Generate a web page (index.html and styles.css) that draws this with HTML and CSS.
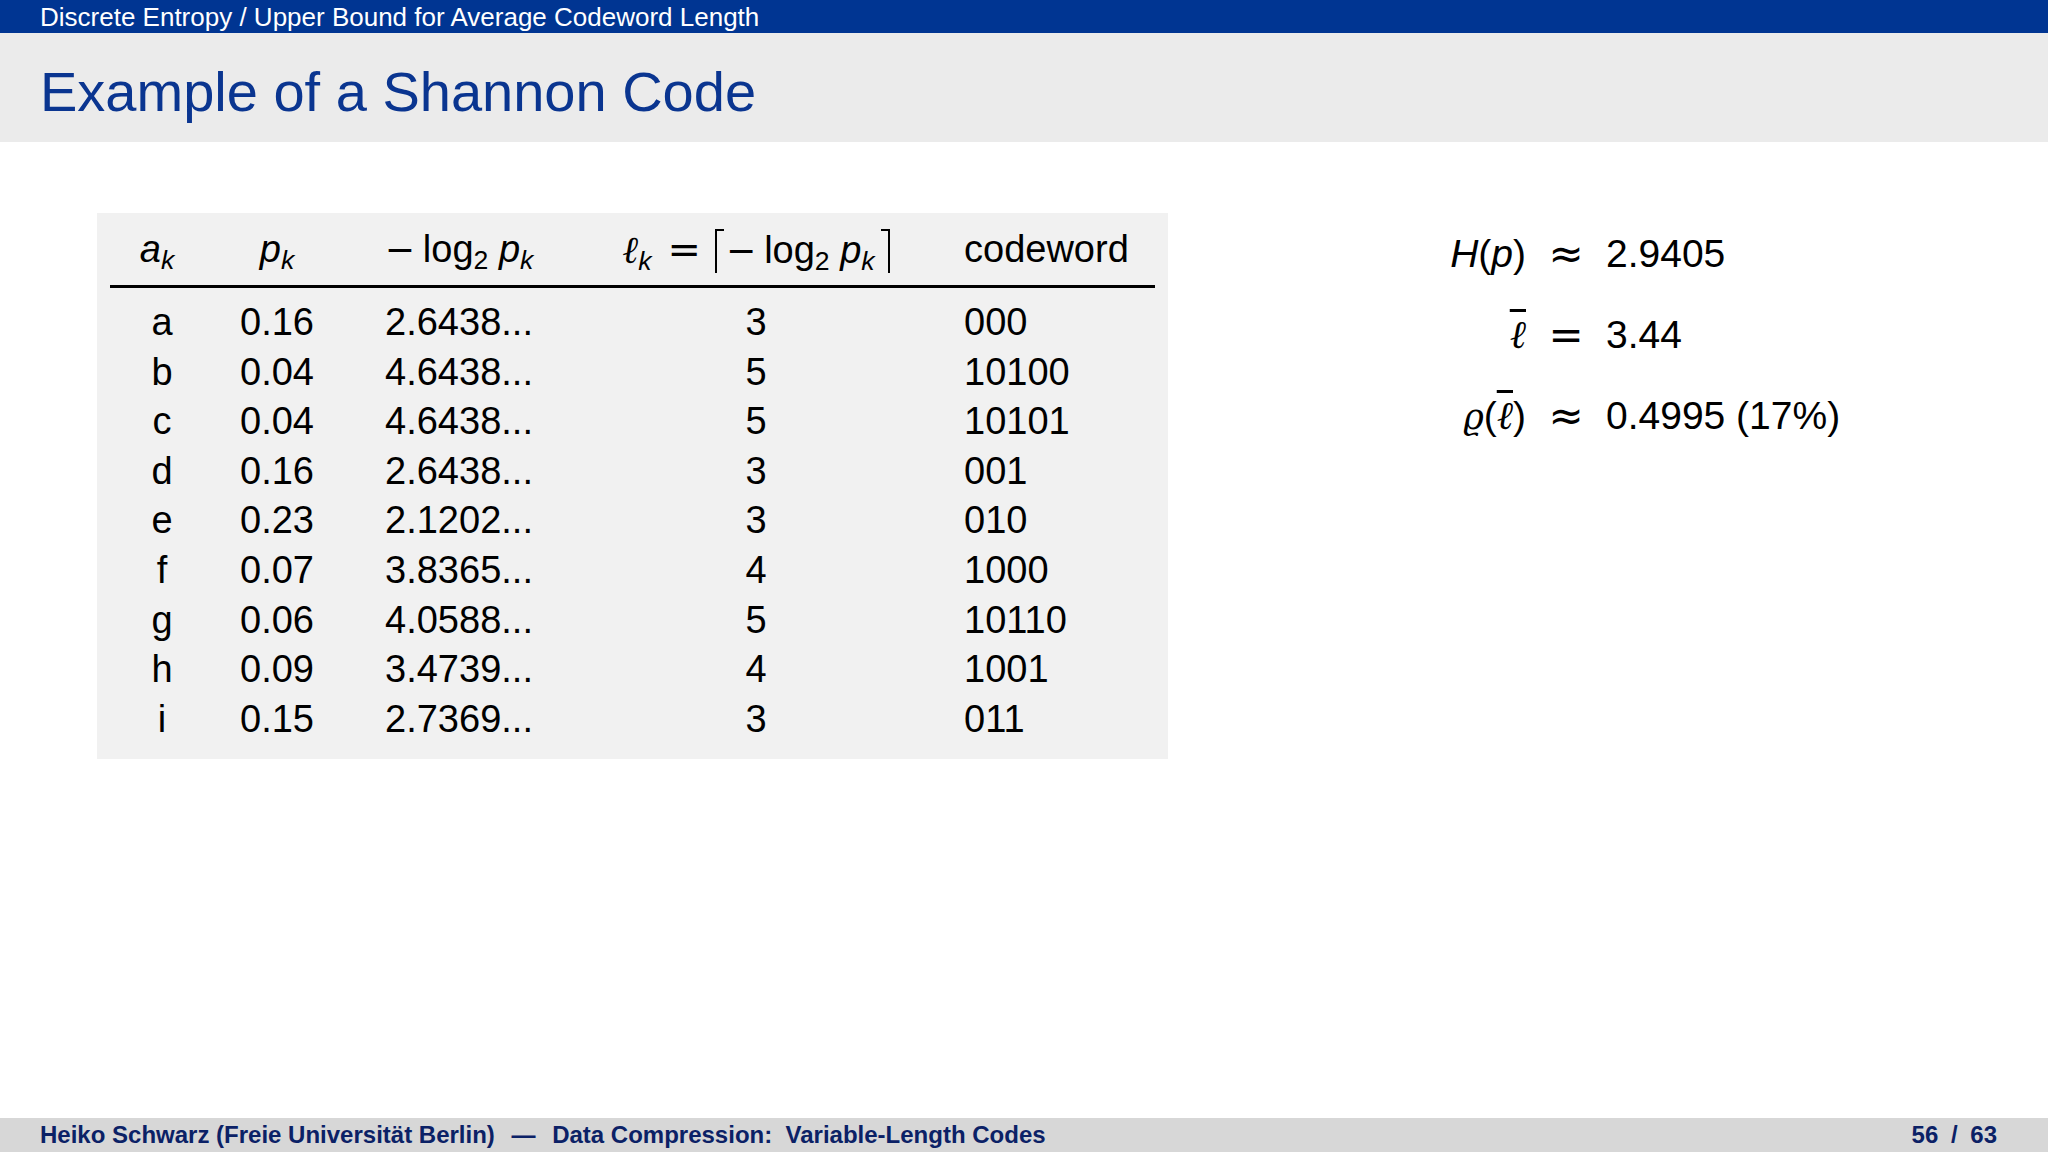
FILE: index.html
```html
<!DOCTYPE html>
<html>
<head>
<meta charset="utf-8">
<link rel="stylesheet" href="styles.css">
</head>
<body>
<div class="slide">
  <header class="topbar">Discrete Entropy / Upper Bound for Average Codeword Length</header>
  <div class="titlebar"><h1 class="title">Example of a Shannon Code</h1></div>
  <main class="content">
    <div class="tablebox">
      <table class="code">
        <thead>
          <tr>
            <th class="c1"><i>a</i><sub><i>k</i></sub></th>
            <th class="c2"><i>p</i><sub><i>k</i></sub></th>
            <th class="c3"><span class="minus">−</span>log<sub>2</sub> <i>p</i><sub><i>k</i></sub></th>
            <th class="c4"><span class="ell">ℓ</span><sub><i>k</i></sub><span class="rel">=</span><span class="lceil"></span><span class="minus">−</span>log<sub>2</sub> <i>p</i><sub><i>k</i></sub><span class="rceil"></span></th>
            <th class="c5">codeword</th>
          </tr>
        </thead>
        <tbody>
          <tr><td class="c1">a</td><td class="c2">0.16</td><td class="c3">2.6438...</td><td class="c4">3</td><td class="c5">000</td></tr>
          <tr><td class="c1">b</td><td class="c2">0.04</td><td class="c3">4.6438...</td><td class="c4">5</td><td class="c5">10100</td></tr>
          <tr><td class="c1">c</td><td class="c2">0.04</td><td class="c3">4.6438...</td><td class="c4">5</td><td class="c5">10101</td></tr>
          <tr><td class="c1">d</td><td class="c2">0.16</td><td class="c3">2.6438...</td><td class="c4">3</td><td class="c5">001</td></tr>
          <tr><td class="c1">e</td><td class="c2">0.23</td><td class="c3">2.1202...</td><td class="c4">3</td><td class="c5">010</td></tr>
          <tr><td class="c1">f</td><td class="c2">0.07</td><td class="c3">3.8365...</td><td class="c4">4</td><td class="c5">1000</td></tr>
          <tr><td class="c1">g</td><td class="c2">0.06</td><td class="c3">4.0588...</td><td class="c4">5</td><td class="c5">10110</td></tr>
          <tr><td class="c1">h</td><td class="c2">0.09</td><td class="c3">3.4739...</td><td class="c4">4</td><td class="c5">1001</td></tr>
          <tr><td class="c1">i</td><td class="c2">0.15</td><td class="c3">2.7369...</td><td class="c4">3</td><td class="c5">011</td></tr>
        </tbody>
      </table>
    </div>
    <div class="eqs">
      <div class="lhs"><i>H</i>(<i>p</i>)</div><div class="op">≈</div><div class="rhs">2.9405</div>
      <div class="lhs"><span class="ell bar">ℓ</span></div><div class="op">=</div><div class="rhs">3.44</div>
      <div class="lhs"><span class="rho">ϱ</span>(<span class="ell bar">ℓ</span>)</div><div class="op">≈</div><div class="rhs">0.4995 (17%)</div>
    </div>
  </main>
  <footer class="footer">
    <div class="foot-left">Heiko Schwarz (Freie Universität Berlin) <span class="dash">—</span> Data Compression:&nbsp; Variable-Length Codes</div>
    <div class="foot-right">56 / 63</div>
  </footer>
</div>
</body>
</html>
```

FILE: styles.css
```css
html, body {
  margin: 0;
  padding: 0;
  background: #ffffff;
}

.slide {
  width: 2048px;
  height: 1152px;
  display: flex;
  flex-direction: column;
  font-family: "Liberation Sans", Arial, sans-serif;
  color: #000;
  overflow: hidden;
}

.topbar {
  height: 33px;
  background: #003592;
  color: #ffffff;
  font-size: 26px;
  line-height: 34px;
  padding-left: 40px;
  box-sizing: border-box;
  white-space: nowrap;
}

.titlebar {
  height: 109px;
  background: #ebebeb;
  display: flex;
  align-items: center;
  padding-left: 40px;
}

.title {
  margin: 0;
  font-weight: normal;
  font-size: 56px;
  color: #0a3590;
  line-height: 1;
  padding-top: 8px;
}

.content {
  flex: 1;
  display: flex;
  align-items: flex-start;
  padding-top: 71px;
  padding-left: 97px;
}

.tablebox {
  width: 1071px;
  height: 546px;
  box-sizing: border-box;
  background: #f1f1f1;
  padding: 0 13px;
}

.code {
  border-collapse: collapse;
  width: 1045px;
  table-layout: fixed;
  font-size: 38px;
}

.code th {
  font-weight: normal;
  height: 72px;
  padding: 0;
  border-bottom: 3px solid #000;
  white-space: nowrap;
  vertical-align: middle;
}

.code tbody tr:first-child td {
  padding-top: 10px;
}

.code td {
  height: 49.6px;
  padding: 0;
  line-height: 49.6px;
}

.code sub {
  font-size: 0.7em;
  vertical-align: -0.25em;
  line-height: 0;
}

.c1 { width: 94px; text-align: center; }
td.c1 { padding-left: 10px !important; }
.c2 { width: 146px; text-align: center; }
.c3 { width: 218px; text-align: center; }
.c4 { width: 376px; text-align: center; }
.c5 { width: 191px; text-align: left; padding-left: 20px !important; }

.minus {
  font-family: "DejaVu Sans", sans-serif;
  font-size: 0.95em;
  margin-right: 8px;
}

.ell {
  font-family: "DejaVu Serif", "Liberation Serif", serif;
  font-style: italic;
  font-size: 1em;
}

.rho {
  font-family: "DejaVu Serif", "Liberation Serif", serif;
  font-style: italic;
  font-size: 0.9em;
}

.rel {
  font-family: "DejaVu Sans", sans-serif;
  font-size: 1.05em;
  margin: 0 14px 0 16px;
}

.lceil, .rceil {
  display: inline-block;
  width: 9px;
  height: 44px;
  border-top: 2px solid #000;
  box-sizing: border-box;
  vertical-align: -10px;
}

.lceil {
  border-left: 2px solid #000;
  margin-right: 2px;
}

.rceil {
  border-right: 2px solid #000;
  margin-left: 6px;
}

.bar {
  text-decoration: overline;
  text-decoration-thickness: 3px;
}

.eqs {
  margin-left: 258px;
  margin-top: 0;
  display: grid;
  grid-template-columns: 100px 80px auto;
  grid-auto-rows: 81px;
  align-items: center;
  font-size: 39px;
}

.lhs { text-align: right; }
.op {
  text-align: center;
  font-family: "DejaVu Sans", sans-serif;
  font-size: 42px;
}
.rhs { text-align: left; }

.footer {
  height: 34px;
  background: #d7d7d7;
  display: flex;
  justify-content: space-between;
  align-items: center;
  padding: 0 51px 0 40px;
  color: #0b2166;
  font-size: 24px;
}

.foot-left {
  font-weight: bold;
}

.dash {
  margin: 0 10px;
}

.foot-right {
  font-weight: bold;
  word-spacing: 6px;
}
```
